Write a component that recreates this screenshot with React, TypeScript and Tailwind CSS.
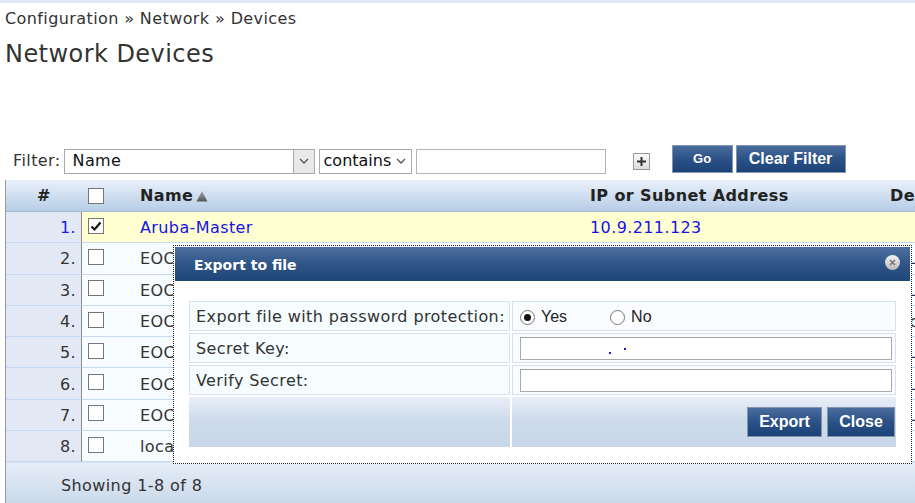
import React from 'react';

interface Device {
  name: string;
  ip: string;
  desc: string;
}

const devices: Device[] = [
  { name: 'Aruba-Master', ip: '10.9.211.123', desc: '' },
  { name: 'EOC-Controller-01', ip: '10.9.211.10', desc: 'WLAN controller' },
  { name: 'EOC-Controller-02', ip: '10.9.211.11', desc: 'WLAN controller' },
  { name: 'EOC-Switch-01', ip: '10.9.211.20', desc: 'access switch' },
  { name: 'EOC-Controller-03', ip: '10.9.211.12', desc: 'WLAN controller' },
  { name: 'EOC-Controller-04', ip: '10.9.211.13', desc: 'WLAN controller' },
  { name: 'EOC-Controller-05', ip: '10.9.211.14', desc: 'WLAN controller' },
  { name: 'localhost', ip: '127.0.0.1', desc: '' },
];

const CheckBox: React.FC<{ checked?: boolean }> = ({ checked }) => (
  <div className="w-4 h-4 border border-[#767676] bg-white flex items-center justify-center">
    {checked && (
      <svg width="12" height="12" viewBox="0 0 12 12">
        <path d="M1.5 6.5 L4.5 9.5 L10.5 2.5" fill="none" stroke="#111" strokeWidth="2.2" />
      </svg>
    )}
  </div>
);

const Radio: React.FC<{ checked?: boolean }> = ({ checked }) => (
  <div className="w-[15px] h-[15px] rounded-full border border-[#767676] bg-white flex items-center justify-center">
    {checked && <div className="w-[7px] h-[7px] rounded-full bg-[#111]" />}
  </div>
);

const Chevron = () => (
  <svg width="10" height="6" viewBox="0 0 10 6">
    <path d="M1 1 L5 5 L9 1" fill="none" stroke="#555" strokeWidth="1.3" />
  </svg>
);

const btn =
  "border border-[#8594aa] bg-gradient-to-b from-[#4a6c9d] via-[#2b5186] to-[#1c4377] text-white font-['Liberation_Sans',sans-serif] font-bold tracking-normal";

export default function App() {
  return (
    <div className="relative w-[915px] h-[503px] overflow-hidden bg-white font-['DejaVu_Sans',sans-serif] text-[16px] tracking-[0.4px] text-[#333]">
      <div className="h-[3px] bg-[#dfe8f3]" />

      {/* breadcrumb + title */}
      <div className="pl-[5px] pt-[7px] leading-[18px] text-[#333]">
        Configuration » Network » Devices
      </div>
      <h1 className="pl-[5px] mt-[12px] text-[24px] leading-[28px] tracking-[0.45px] text-[#333]">Network Devices</h1>

      {/* filter row */}
      <div className="flex items-center mt-[79px] pl-[13px] h-[28px]">
        <span className="mr-[3px]">Filter:</span>
        <div className="flex items-center w-[251px] h-[25px] border border-[#a9a9a9] bg-white">
          <span className="flex-1 pl-[8px] text-[#111]">Name</span>
          <div className="w-[21px] h-[23px] bg-[#e9e9e9] border-l border-[#a9a9a9] flex items-center justify-center">
            <Chevron />
          </div>
        </div>
        <div className="flex items-center ml-[4px] w-[93px] h-[25px] border border-[#a9a9a9] bg-white pl-[4px] pr-[5px]">
          <span className="flex-1 text-[#111] tracking-normal">contains</span>
          <Chevron />
        </div>
        <div className="ml-[4px] w-[190px] h-[25px] border border-[#b5b5b5] bg-white" />
        <div className="ml-[27px] w-[17px] h-[17px] border border-[#999] bg-gradient-to-b from-[#fafafa] to-[#dcdcdc] flex items-center justify-center">
          <svg width="11" height="11" viewBox="0 0 11 11">
            <path d="M5.5 1 V10 M1 5.5 H10" stroke="#333" strokeWidth="2" />
          </svg>
        </div>
        <button className={`ml-[22px] w-[61px] h-[28px] -mt-[4px] text-[13px] ${btn}`}>Go</button>
        <button className={`ml-[3px] w-[110px] h-[28px] -mt-[4px] text-[16px] ${btn}`}>Clear Filter</button>
      </div>

      {/* table */}
      <div className="ml-[5px] mt-[5px] border-l border-[#9a9a9a]">
        <div className="flex items-center h-[32px] bg-gradient-to-b from-[#eaf1fa] to-[#b6cde7] border-b border-[#a8b8cc] font-bold text-[#222] whitespace-nowrap">
          <div className="w-[76px] shrink-0 text-center">#</div>
          <div className="w-[40px] shrink-0 pl-[6px]"><CheckBox /></div>
          <div className="w-[468px] shrink-0 pl-[18px] flex items-center gap-[3px]">
            Name
            <svg width="12" height="12" viewBox="0 0 12 12">
              <defs>
                <linearGradient id="tri" x1="0" y1="0" x2="0" y2="1">
                  <stop offset="0" stopColor="#aaa" />
                  <stop offset="1" stopColor="#555" />
                </linearGradient>
              </defs>
              <path d="M6 1 L11.5 11.5 H0.5 Z" fill="url(#tri)" />
            </svg>
          </div>
          <div className="w-[300px] shrink-0">IP or Subnet Address</div>
          <div className="shrink-0">Description</div>
        </div>

        {devices.map((d, i) => {
          const sel = i === 0;
          return (
            <div key={i} className="flex h-[31.3px] whitespace-nowrap">
              <div
                className={`w-[76px] shrink-0 pr-[5px] pt-[2px] flex items-center justify-end bg-[#e3e9f4] border-b border-[#c6d9f4] border-r border-r-[#8a8a8a] ${sel ? 'text-[#1a1aee]' : 'text-[#333]'}`}
              >
                {i + 1}.
              </div>
              <div
                className={`flex-1 flex items-center pt-[2px] overflow-hidden border-b border-[#c6d9f4] ${sel ? 'bg-[#ffffd2]' : 'bg-[#f6fcff]'}`}
              >
                <div className="w-[40px] shrink-0 pl-[6px] -mt-[5px]"><CheckBox checked={sel} /></div>
                <div className={`w-[468px] shrink-0 pl-[18px] ${sel ? 'text-[#1414e6]' : ''}`}>{d.name}</div>
                <div className={`w-[300px] shrink-0 ${sel ? 'text-[#1414e6]' : ''}`}>{d.ip}</div>
                <div className="shrink-0">{d.desc}</div>
              </div>
            </div>
          );
        })}

        <div className="h-[42px] pt-[13px] pl-[55px] leading-[19px] bg-gradient-to-b from-[#e6edf8] to-[#c9d9ea] border-t border-[#d8e3f2] text-[#333]">
          Showing 1-8 of 8
        </div>
      </div>

      {/* export dialog */}
      <div className="absolute left-[173px] top-[245px] w-[739px] h-[219px] border border-dotted border-[#222] bg-white p-px">
        <div className="relative h-[34px] flex items-center pl-[19px] pt-[2px] bg-gradient-to-b from-[#4f70a0] via-[#2f5588] to-[#1f4679] text-white font-bold text-[14px] tracking-normal">
          Export to file
          <div className="absolute right-[10px] top-[8px] w-[15px] h-[15px] rounded-full bg-gradient-to-b from-[#f4f4f4] to-[#b9b9b9] flex items-center justify-center">
            <svg width="7" height="7" viewBox="0 0 7 7">
              <path d="M1 1 L6 6 M6 1 L1 6" stroke="#777" strokeWidth="1.5" />
            </svg>
          </div>
        </div>

        <div className="mt-[20px] mx-[14px] grid grid-cols-[321px_1fr] gap-[2px] text-[#333] whitespace-nowrap">
          <div className="h-[30px] flex items-center pl-[6px] pt-[2px] bg-[#f5fdff] border border-[#d6e1f5]">
            Export file with password protection:
          </div>
          <div className="h-[30px] flex items-center pl-[7px] pt-[2px] bg-[#fafcff] border border-[#d6e1f5] font-['Liberation_Sans',sans-serif] tracking-normal text-[#222]">
            <Radio checked />
            <span className="ml-[6px]">Yes</span>
            <div className="ml-[43px]"><Radio /></div>
            <span className="ml-[6px]">No</span>
          </div>

          <div className="h-[30px] flex items-center pl-[6px] pt-[2px] bg-[#f5fdff] border border-[#d6e1f5]">Secret Key:</div>
          <div className="h-[30px] flex items-center pl-[7px] pr-[3px] bg-[#fafcff] border border-[#d6e1f5]">
            <div className="relative w-full h-[23px] border border-[#a9a9a9] bg-white">
              <span className="absolute left-[88px] top-[14px] w-[2px] h-[2px] bg-[#1a1aee]" />
              <span className="absolute left-[103px] top-[10px] w-[2px] h-[2px] bg-[#1a1aee]" />
            </div>
          </div>

          <div className="h-[30px] flex items-center pl-[6px] pt-[2px] bg-[#f5fdff] border border-[#d6e1f5]">Verify Secret:</div>
          <div className="h-[30px] flex items-center pl-[7px] pr-[3px] bg-[#fafcff] border border-[#d6e1f5]">
            <div className="w-full h-[23px] border border-[#a9a9a9] bg-white" />
          </div>

          <div className="h-[50px] bg-gradient-to-b from-[#e8eef8] via-[#ccdaea] to-[#c9d8e9]" />
          <div className="h-[50px] flex items-center justify-end gap-[5px] pr-[1px] bg-gradient-to-b from-[#e8eef8] via-[#ccdaea] to-[#c9d8e9]">
            <button className={`w-[75px] h-[30px] text-[16px] ${btn}`}>Export</button>
            <button className={`w-[68px] h-[30px] text-[16px] ${btn}`}>Close</button>
          </div>
        </div>
      </div>
    </div>
  );
}
